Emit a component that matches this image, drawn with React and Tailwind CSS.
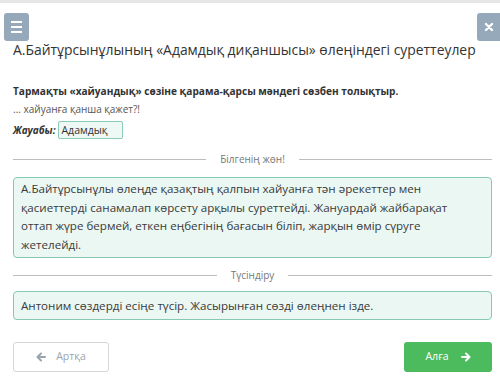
export default function App() {
  return (
    <main className="relative w-[500px] h-[384px] overflow-hidden bg-white text-[#333] font-['Open_Sans',sans-serif] border-t-[3px] border-[#e6e6e6]">
      {/* top buttons */}
      <button className="absolute left-[4px] top-[10px] w-[25px] h-[28px] rounded-[3px] bg-[#95a9bb] flex items-center justify-center">
        <span className="flex flex-col gap-[3px]">
          <span className="block w-[11px] h-[2px] bg-white"></span>
          <span className="block w-[11px] h-[2px] bg-white"></span>
          <span className="block w-[11px] h-[2px] bg-white"></span>
        </span>
      </button>
      <button className="absolute right-0 top-[10px] w-[23px] h-[28px] rounded-l-[3px] bg-[#95a9bb] flex items-center justify-center">
        <svg width="10" height="10" viewBox="0 0 10 10">
          <path d="M2 2 L8 8 M8 2 L2 8" stroke="white" strokeWidth="2.4" strokeLinecap="round" />
        </svg>
      </button>

      <div className="pl-[13px] pr-[8px] pt-[36px]">
        <h1 className="text-[13.9px] leading-[22px] text-[#333] whitespace-nowrap">
          А.Байтұрсынұлының «Адамдық диқаншысы» өлеңіндегі суреттеулер
        </h1>

        <p className="mt-[22px] text-[10.1px] leading-[16px] font-bold text-[#333]">
          Тармақты «хайуандық» сөзіне қарама-қарсы мәндегі сөзбен толықтыр.
        </p>
        <p className="mt-[2px] text-[10px] leading-[16px] text-[#555]">... хайуанға қанша қажет?!</p>

        <div className="mt-[4px] flex items-center gap-[3px]">
          <span className="text-[10px] font-bold italic text-[#333]">Жауабы:</span>
          <span className="w-[65px] h-[18px] border border-[#8ccbb8] rounded-[2px] bg-[#eef8f5] px-[2px] text-[10.5px] leading-[16px] text-[#333]">
            Адамдық
          </span>
        </div>

        {/* divider */}
        <div className="mt-[13px] flex items-center gap-[14px]">
          <div className="flex-1 h-px bg-[#bdbdbd]"></div>
          <span className="text-[10px] text-[#777]">Білгенің жөн!</span>
          <div className="flex-1 h-px bg-[#bdbdbd]"></div>
        </div>

        <div className="mt-[10px] rounded-[4px] border border-[#86c8b4] bg-[#ebf7f3] pl-[7px] pr-[28px] py-[2px] text-[11.6px] leading-[18.7px] text-[#3a3a3a]">
          А.Байтұрсынұлы өлеңде қазақтың қалпын хайуанға тән әрекеттер мен қасиеттерді санамалап көрсету арқылы суреттейді. Жануардай жайбарақат оттап жүре бермей, еткен еңбегінің бағасын біліп, жарқын өмір сүруге жетелейді.
        </div>

        <div className="mt-[10px] flex items-center gap-[14px]">
          <div className="flex-1 h-px bg-[#bdbdbd]"></div>
          <span className="text-[10px] text-[#777]">Түсіндіру</span>
          <div className="flex-1 h-px bg-[#bdbdbd]"></div>
        </div>

        <div className="mt-[8px] rounded-[4px] border border-[#86c8b4] bg-[#ebf7f3] pl-[7px] py-[4px] text-[11.6px] leading-[19px] text-[#3a3a3a]">
          Антоним сөздерді есіңе түсір. Жасырынған сөзді өлеңнен ізде.
        </div>

        <div className="mt-[22px] flex justify-between">
          <button className="w-[96px] h-[30px] rounded-[3px] border border-[#d6d6d6] bg-white flex items-center justify-center gap-[10px] text-[10.5px] text-[#9aa4ae]">
            <svg width="10" height="10" viewBox="0 0 10 10">
              <path d="M9 5 H2 M5 1.5 L1.5 5 L5 8.5" stroke="#9aa4ae" strokeWidth="2" fill="none" strokeLinecap="round" strokeLinejoin="round" />
            </svg>
            Артқа
          </button>
          <button className="w-[88px] h-[30px] rounded-[3px] bg-[#4cbb5e] flex items-center justify-center gap-[12px] text-[10.5px] text-white">
            Алға
            <svg width="10" height="10" viewBox="0 0 10 10">
              <path d="M1 5 H8 M5 1.5 L8.5 5 L5 8.5" stroke="white" strokeWidth="2" fill="none" strokeLinecap="round" strokeLinejoin="round" />
            </svg>
          </button>
        </div>
      </div>
    </main>
  );
}
